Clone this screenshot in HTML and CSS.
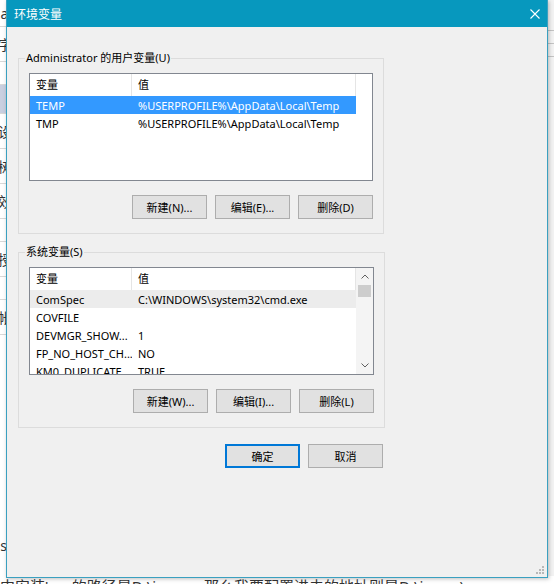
FILE: index.html
```html
<!DOCTYPE html>
<html lang="zh-CN">
<head>
  <meta charset="UTF-8">
  <title>环境变量</title>
  <link rel="stylesheet" href="styles.css">
</head>
<body>
  <!-- Page behind the dialog -->
  <div class="page">
    <div class="page-main">
      <div class="side">
        <div class="side-item tall">Mai</div>
        <div class="side-item">文字</div>
        <div class="side-item spacer"></div>
        <div class="side-item active"></div>
        <div class="side-item">预设</div>
        <div class="side-item">树</div>
        <div class="side-item">生效</div>
        <div class="side-item spacer"></div>
        <div class="side-item">授</div>
        <div class="side-item spacer"></div>
        <div class="side-item">帐</div>
        <div class="side-fill"></div>
        <div class="side-item plain">st</div>
      </div>
      <div class="content"></div>
      <div class="right-strip">
        <div class="strip-line"></div>
        <div class="strip-line"></div>
        <div class="strip-line"></div>
      </div>
    </div>
    <div class="page-text">中安装'&nbsp;&nbsp;&nbsp;&nbsp;&nbsp;&nbsp;的路径是D:\java&nbsp;&nbsp;&nbsp;&nbsp;&nbsp;&nbsp;那么我要配置进去的地址则是D:\java&nbsp;&nbsp;&nbsp;)</div>
  </div>

  <!-- Environment variables dialog -->
  <div class="dialog">
    <div class="titlebar">
      <span class="title">环境变量</span>
      <svg class="close" width="10" height="10" viewBox="0 0 10 10">
        <path d="M0.5 0.5 L9.5 9.5 M9.5 0.5 L0.5 9.5" stroke="#fff" stroke-width="1.1" fill="none"/>
      </svg>
    </div>

    <div class="dialog-body">
      <fieldset class="group">
        <legend>Administrator 的用户变量(U)</legend>
        <div class="list">
          <div class="list-rows">
            <div class="row head">
              <div class="cell name">变量</div>
              <div class="cell value">值</div>
            </div>
            <div class="row selected">
              <div class="cell name">TEMP</div>
              <div class="cell value">%USERPROFILE%\AppData\Local\Temp</div>
            </div>
            <div class="row">
              <div class="cell name">TMP</div>
              <div class="cell value">%USERPROFILE%\AppData\Local\Temp</div>
            </div>
          </div>
        </div>
        <div class="buttons">
          <button>新建(N)...</button>
          <button>编辑(E)...</button>
          <button>删除(D)</button>
        </div>
      </fieldset>

      <fieldset class="group system">
        <legend>系统变量(S)</legend>
        <div class="list">
          <div class="list-rows">
            <div class="row head">
              <div class="cell name">变量</div>
              <div class="cell value">值</div>
            </div>
            <div class="row hover">
              <div class="cell name">ComSpec</div>
              <div class="cell value">C:\WINDOWS\system32\cmd.exe</div>
            </div>
            <div class="row">
              <div class="cell name">COVFILE</div>
              <div class="cell value"></div>
            </div>
            <div class="row">
              <div class="cell name">DEVMGR_SHOW...</div>
              <div class="cell value">1</div>
            </div>
            <div class="row">
              <div class="cell name">FP_NO_HOST_CH...</div>
              <div class="cell value">NO</div>
            </div>
            <div class="row">
              <div class="cell name">KM0_DUPLICATE</div>
              <div class="cell value">TRUE</div>
            </div>
          </div>
          <div class="scrollbar">
            <div class="arrow">
              <svg width="8" height="5" viewBox="0 0 8 5"><path d="M0.5 4.5 L4 1 L7.5 4.5" stroke="#606060" fill="none"/></svg>
            </div>
            <div class="thumb"></div>
            <div class="track"></div>
            <div class="arrow">
              <svg width="8" height="5" viewBox="0 0 8 5"><path d="M0.5 0.5 L4 4 L7.5 0.5" stroke="#606060" fill="none"/></svg>
            </div>
          </div>
        </div>
        <div class="buttons">
          <button>新建(W)...</button>
          <button>编辑(I)...</button>
          <button>删除(L)</button>
        </div>
      </fieldset>

      <div class="dialog-buttons">
        <button class="default">确定</button>
        <button>取消</button>
      </div>
    </div>

    <svg class="grip" width="8" height="8" viewBox="0 0 8 8">
      <rect x="6" y="0" width="2" height="2" fill="#b8b8b8"/>
      <rect x="3" y="3" width="2" height="2" fill="#b8b8b8"/>
      <rect x="6" y="3" width="2" height="2" fill="#b8b8b8"/>
      <rect x="0" y="6" width="2" height="2" fill="#b8b8b8"/>
      <rect x="3" y="6" width="2" height="2" fill="#b8b8b8"/>
      <rect x="6" y="6" width="2" height="2" fill="#b8b8b8"/>
    </svg>
  </div>
</body>
</html>
```

FILE: styles.css
```css
body {
  margin: 0;
  width: 554px;
  height: 584px;
  overflow: hidden;
  position: relative;
  background: #fff;
  font-family: "Segoe UI", "Noto Sans", "Noto Sans CJK SC", sans-serif;
  font-size: 11px;
  color: #000;
}

/* Background page */
.page {
  height: 584px;
  display: flex;
  flex-direction: column;
}

.page-main {
  flex: 1;
  display: flex;
}

.side {
  width: 12px;
  display: flex;
  flex-direction: column;
  overflow: hidden;
  font-size: 14px;
  color: #333;
}

.side-item {
  height: 34px;
  display: flex;
  align-items: center;
  justify-content: flex-end;
  white-space: nowrap;
  border-bottom: 1px solid #d8d8d8;
}

.side-item.tall { height: 26px; }
.side-item.spacer { height: 22px; }
.side-item.active { height: 28px; background: #c9cfe0; }
.side-item.plain { border-bottom: none; height: 30px; margin-bottom: 16px; }

.side-fill { flex: 1; }

.content { flex: 1; }

.right-strip {
  width: 7px;
  background: #f3f3f3;
  padding-top: 30px;
  display: flex;
  flex-direction: column;
  gap: 12px;
}

.strip-line {
  height: 1px;
  background: #c4c4c4;
}

.page-text {
  height: 8px;
  font-size: 15px;
  line-height: 20px;
  color: #333;
  white-space: nowrap;
}

/* Dialog window */
.dialog {
  position: absolute;
  left: 6px;
  top: 0;
  width: 542px;
  height: 578px;
  box-sizing: border-box;
  background: #f0f0f0;
  border: 1px solid #3aa0c0;
  border-top: none;
  box-shadow: 1px 1px 4px rgba(0, 0, 0, 0.25);
}

.titlebar {
  height: 27px;
  background: #0798be;
  display: flex;
  align-items: center;
  justify-content: space-between;
  padding: 0 7px;
  color: #fff;
  font-size: 12px;
}

.dialog-body {
  padding: 23px 0 0 11px;
}

.group {
  width: 366px;
  box-sizing: border-box;
  margin: 0;
  padding: 0 10px 14px;
  border: 1px solid #dcdcdc;
}

.group legend {
  padding: 0 1px;
  margin-left: -4px;
  line-height: 16px;
}

.group.system {
  margin-top: 10px;
}

.list {
  margin-top: 7px;
  height: 108px;
  box-sizing: border-box;
  border: 1px solid #828790;
  background: #fff;
  display: flex;
  overflow: hidden;
}

.list-rows {
  flex: 1;
  overflow: hidden;
}

.row {
  display: flex;
  height: 18px;
  align-items: center;
  width: 326px;
  white-space: nowrap;
}

.row.head { height: 22px; }

.row.head .cell {
  height: 22px;
  line-height: 22px;
  border-right: 1px solid #e5e5e5;
}

.cell {
  padding-left: 6px;
  box-sizing: border-box;
  overflow: hidden;
}

.cell.name { width: 102px; }
.cell.value { width: 224px; }

.row.selected {
  background: #3399ff;
  color: #fff;
}

.row.hover {
  background: #ececec;
  width: 100%;
}

.scrollbar {
  width: 17px;
  background: #f4f4f4;
  display: flex;
  flex-direction: column;
}

.arrow {
  height: 17px;
  display: flex;
  align-items: center;
  justify-content: center;
}

.thumb {
  height: 12px;
  margin: 0 2px;
  background: #cdcdcd;
}

.track { flex: 1; }

.buttons {
  margin-top: 14px;
  display: flex;
  justify-content: flex-end;
  gap: 8px;
}

button {
  width: 75px;
  height: 24px;
  padding: 0;
  font-family: inherit;
  font-size: 11px;
  color: #000;
  background: #e1e1e1;
  border: 1px solid #adadad;
  border-radius: 0;
}

.dialog-buttons {
  width: 365px;
  margin-top: 16px;
  display: flex;
  justify-content: flex-end;
  gap: 8px;
}

button.default {
  border-color: #0078d7;
  box-shadow: inset 0 0 0 1px #0078d7;
}

.grip {
  position: absolute;
  right: 3px;
  bottom: 3px;
}
```
